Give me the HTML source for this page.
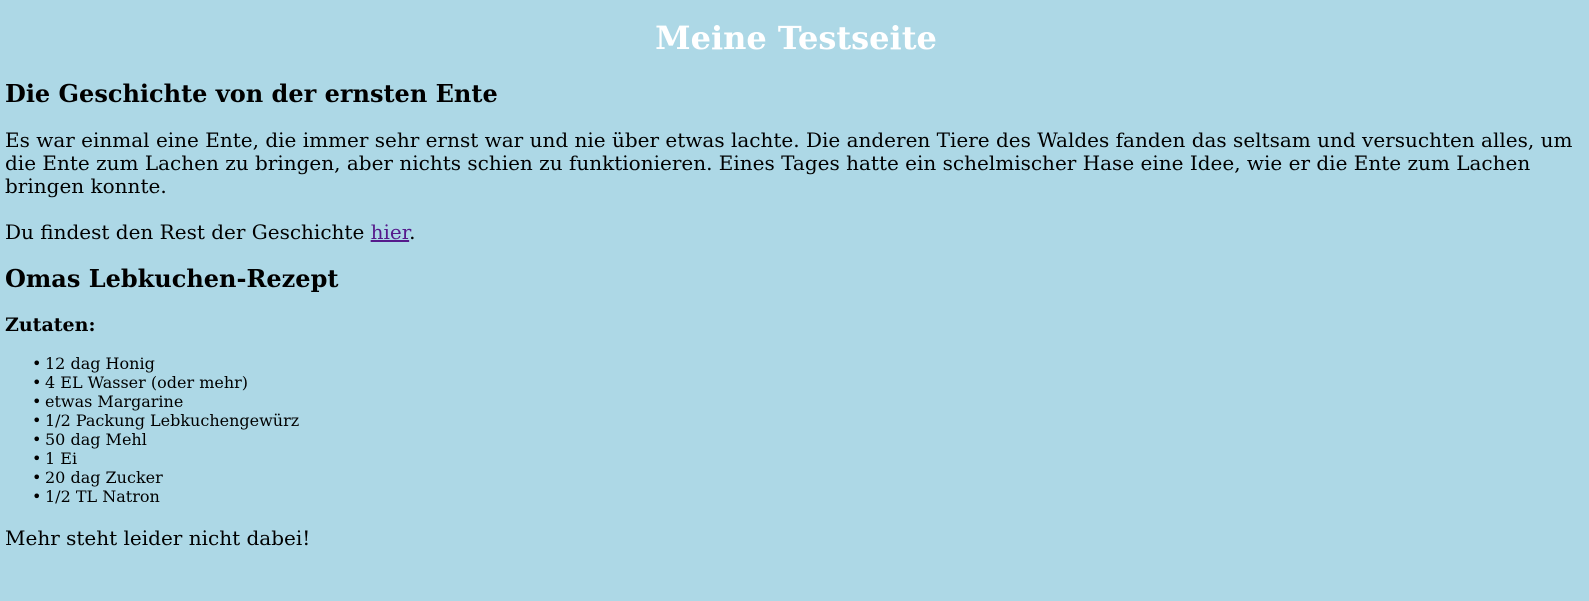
<!DOCTYPE html>
<html><head><meta charset="utf-8"><style>
html,body{margin:0;background:#add8e6;}
body{padding:0 5px;font-family:"DejaVu Serif","Liberation Serif",serif;color:#000;}
h1{font-size:32px;line-height:37px;margin:20px 0 0;text-align:center;color:#fff;font-weight:bold;padding-left:3px;}
h2{font-size:24px;line-height:28px;margin:23px 0 0;font-weight:bold;}
h2.second{margin-top:21px;}
p{font-size:20px;line-height:23px;margin:21px 0 0;}
p.p2{margin-top:23px;}
h3{font-size:19px;line-height:22px;margin:21px 0 0;font-weight:bold;}
ul{margin:18px 0 0;padding-left:40px;font-size:16px;line-height:19px;list-style:none;}
li{position:relative;}
li::before{content:"•";position:absolute;left:-13px;top:0;}
p.last{margin-top:21px;}
a{color:#551a8b;}
</style></head><body>
<h1>Meine Testseite</h1>
<h2>Die Geschichte von der ernsten Ente</h2>
<p>Es war einmal eine Ente, die immer sehr ernst war und nie über etwas lachte. Die anderen Tiere des Waldes fanden das seltsam und versuchten alles, um die Ente zum Lachen zu bringen, aber nichts schien zu funktionieren. Eines Tages hatte ein schelmischer Hase eine Idee, wie er die Ente zum Lachen bringen konnte.</p>
<p class="p2">Du findest den Rest der Geschichte <a href="#">hier</a>.</p>
<h2 class="second">Omas Lebkuchen-Rezept</h2>
<h3>Zutaten:</h3>
<ul>
<li>12 dag Honig</li>
<li>4 EL Wasser (oder mehr)</li>
<li>etwas Margarine</li>
<li>1/2 Packung Lebkuchengewürz</li>
<li>50 dag Mehl</li>
<li>1 Ei</li>
<li>20 dag Zucker</li>
<li>1/2 TL Natron</li>
</ul>
<p class="last">Mehr steht leider nicht dabei!</p>
</body></html>
